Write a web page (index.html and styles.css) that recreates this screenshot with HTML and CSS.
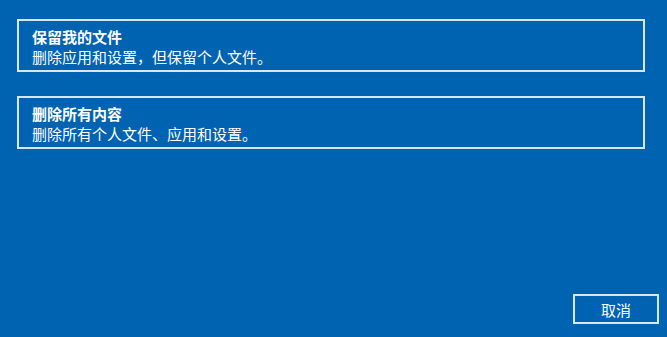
FILE: index.html
```html
<!DOCTYPE html>
<html>
<head>
    <meta charset="UTF-8">
    <title>重置此电脑</title>
    <link rel="stylesheet" href="styles.css">
</head>
<body>
<div class="page">
    <div class="options">
        <div class="option">
            <div class="option-title">保留我的文件</div>
            <div class="option-desc">删除应用和设置，但保留个人文件。</div>
        </div>
        <div class="option">
            <div class="option-title">删除所有内容</div>
            <div class="option-desc">删除所有个人文件、应用和设置。</div>
        </div>
    </div>
    <div class="footer">
        <button class="cancel">取消</button>
    </div>
</div>
</body>
</html>
```

FILE: styles.css
```css
html, body {
    margin: 0;
    height: 100%;
}
body {
    background-color: #0063b1;
    color: #ffffff;
    font-family: "Microsoft YaHei", "Noto Sans CJK SC", sans-serif;
}
.page {
    height: 100%;
    box-sizing: border-box;
    display: flex;
    flex-direction: column;
    padding: 19px 8px 13px 17px;
}
.options {
    display: flex;
    flex-direction: column;
    gap: 24px;
    padding-right: 14px;
}
.option {
    border: 2px solid #d9e6f3;
    padding: 6px 13px 3px;
}
.option-title {
    font-size: 15px;
    font-weight: bold;
    line-height: 20px;
}
.option-desc {
    font-size: 15px;
    line-height: 20px;
}
.footer {
    margin-top: auto;
    display: flex;
    justify-content: flex-end;
}
.cancel {
    width: 86px;
    height: 30px;
    background: transparent;
    border: 2px solid #d9e6f3;
    color: #ffffff;
    font-family: inherit;
    font-size: 15px;
    padding: 0;
}
```
